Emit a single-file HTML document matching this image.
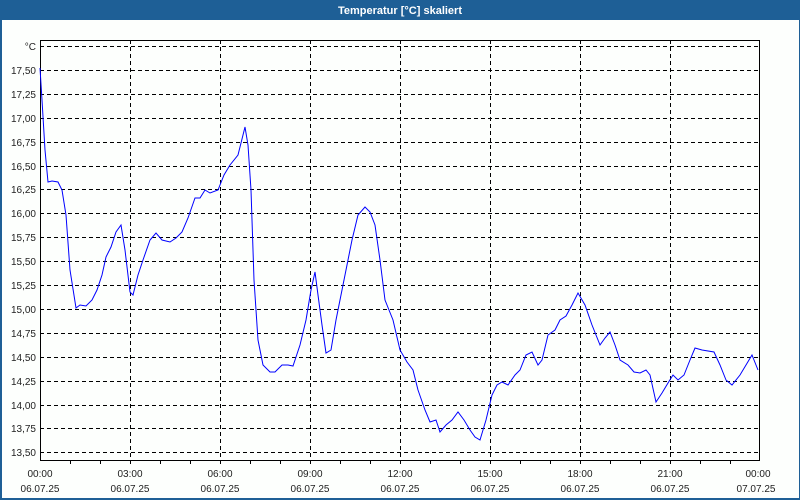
<!DOCTYPE html>
<html><head><style>
body{margin:0;width:800px;height:500px;overflow:hidden;background:#1e5f96;font-family:"Liberation Sans",sans-serif}
</style></head><body>
<svg width="800" height="500" xmlns="http://www.w3.org/2000/svg" style="position:absolute;left:0;top:0">
<rect x="0" y="0" width="800" height="20" fill="#1e5f96"/>
<text x="400" y="14" font-size="11" font-weight="bold" fill="#fff" text-anchor="middle" font-family="Liberation Sans">Temperatur [°C] skaliert</text>
<rect x="2" y="20" width="797" height="478" fill="#fdfffd"/>
<g stroke="#000" stroke-width="1" stroke-dasharray="4,3" shape-rendering="crispEdges">
<line x1="40" x2="760" y1="46.5" y2="46.5"/>
<line x1="40" x2="760" y1="70.5" y2="70.5"/>
<line x1="40" x2="760" y1="94.5" y2="94.5"/>
<line x1="40" x2="760" y1="118.5" y2="118.5"/>
<line x1="40" x2="760" y1="142.5" y2="142.5"/>
<line x1="40" x2="760" y1="166.5" y2="166.5"/>
<line x1="40" x2="760" y1="189.5" y2="189.5"/>
<line x1="40" x2="760" y1="213.5" y2="213.5"/>
<line x1="40" x2="760" y1="237.5" y2="237.5"/>
<line x1="40" x2="760" y1="261.5" y2="261.5"/>
<line x1="40" x2="760" y1="285.5" y2="285.5"/>
<line x1="40" x2="760" y1="309.5" y2="309.5"/>
<line x1="40" x2="760" y1="333.5" y2="333.5"/>
<line x1="40" x2="760" y1="357.5" y2="357.5"/>
<line x1="40" x2="760" y1="381.5" y2="381.5"/>
<line x1="40" x2="760" y1="405.5" y2="405.5"/>
<line x1="40" x2="760" y1="428.5" y2="428.5"/>
<line x1="40" x2="760" y1="452.5" y2="452.5"/>
<line y1="40" y2="464" x1="130.5" x2="130.5"/>
<line y1="40" y2="464" x1="220.5" x2="220.5"/>
<line y1="40" y2="464" x1="310.5" x2="310.5"/>
<line y1="40" y2="464" x1="400.5" x2="400.5"/>
<line y1="40" y2="464" x1="490.5" x2="490.5"/>
<line y1="40" y2="464" x1="580.5" x2="580.5"/>
<line y1="40" y2="464" x1="670.5" x2="670.5"/>
</g>
<g stroke="#000" stroke-width="1" shape-rendering="crispEdges">
<path d="M70.5 461v3M100.5 461v3M160.5 461v3M190.5 461v3M250.5 461v3M280.5 461v3M340.5 461v3M370.5 461v3M430.5 461v3M460.5 461v3M520.5 461v3M550.5 461v3M610.5 461v3M640.5 461v3M700.5 461v3M730.5 461v3"/>
</g>
<rect x="40.5" y="40.5" width="719" height="420" fill="none" stroke="#000" stroke-width="1" shape-rendering="crispEdges"/>
<polyline fill="none" stroke="#0000ff" stroke-width="1" points="40,68 42,100 45,150 48,182 52,181 58,182 62,190 66,215 70,270 76,308 80,305 86,306 92,300 97,290 102,275 106,257 111,247 116,232 121,225 125,250 130,292 133,295 138,275 143,260 150,240 156,233 162,240 170,242 176,238 182,232 188,218 195,198 200,198 205,190 210,193 218,190 224,175 230,165 238,155 245,127 248,145 251,190 254,280 258,340 263,365 270,372 275,372 282,365 288,365 293,366 300,345 306,320 311,290 315,272 318,295 322,325 326,353 331,350 336,320 342,290 347,265 352,240 358,215 365,207 370,212 375,225 380,260 385,300 393,320 400,350 407,362 413,370 418,390 425,410 430,422 436,420 440,432 446,425 452,420 458,412 464,420 470,430 475,437 480,440 486,420 492,395 497,385 502,382 508,385 515,375 520,370 526,355 532,352 538,365 542,360 548,335 555,330 560,320 566,316 572,305 578,293 585,305 592,325 600,345 605,338 610,332 615,345 620,360 628,365 634,372 640,373 646,370 650,375 656,402 662,393 668,383 673,375 678,380 684,375 690,360 695,348 702,350 714,352 720,365 726,380 732,385 740,375 746,365 752,355 758,370"/>
<g font-size="10" fill="#222" text-anchor="end" font-family="Liberation Sans">
<text x="36" y="50">°C</text>
<text x="36" y="74">17,50</text>
<text x="36" y="98">17,25</text>
<text x="36" y="122">17,00</text>
<text x="36" y="146">16,75</text>
<text x="36" y="170">16,50</text>
<text x="36" y="193">16,25</text>
<text x="36" y="217">16,00</text>
<text x="36" y="241">15,75</text>
<text x="36" y="265">15,50</text>
<text x="36" y="289">15,25</text>
<text x="36" y="313">15,00</text>
<text x="36" y="337">14,75</text>
<text x="36" y="361">14,50</text>
<text x="36" y="385">14,25</text>
<text x="36" y="409">14,00</text>
<text x="36" y="432">13,75</text>
<text x="36" y="456">13,50</text>
</g>
<g font-size="10" fill="#222" text-anchor="middle" font-family="Liberation Sans">
<text x="40" y="477">00:00</text><text x="40" y="492">06.07.25</text>
<text x="130" y="477">03:00</text><text x="130" y="492">06.07.25</text>
<text x="220" y="477">06:00</text><text x="220" y="492">06.07.25</text>
<text x="310" y="477">09:00</text><text x="310" y="492">06.07.25</text>
<text x="400" y="477">12:00</text><text x="400" y="492">06.07.25</text>
<text x="490" y="477">15:00</text><text x="490" y="492">06.07.25</text>
<text x="580" y="477">18:00</text><text x="580" y="492">06.07.25</text>
<text x="670" y="477">21:00</text><text x="670" y="492">06.07.25</text>
<text x="758" y="477">00:00</text><text x="756" y="492">07.07.25</text>
</g>
</svg>
</body></html>
